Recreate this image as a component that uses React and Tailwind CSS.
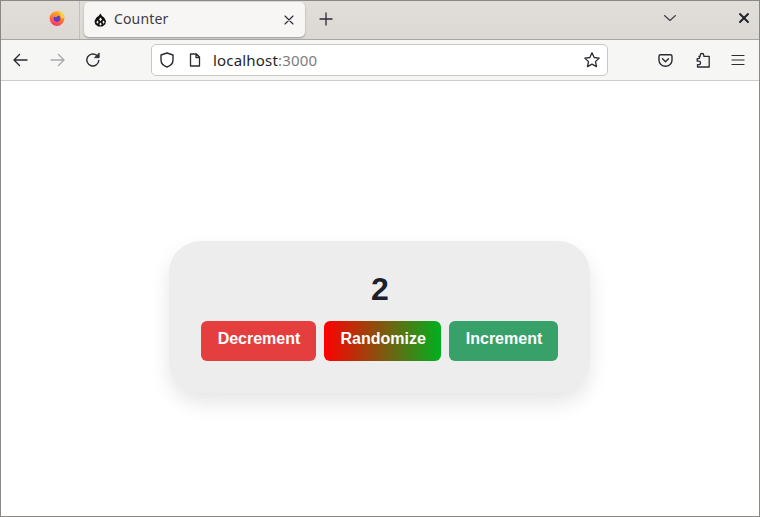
import React from "react";

const ui = { fontFamily: '"Noto Sans", sans-serif' };

function Firefox() {
  return (
    <svg width="16" height="16" viewBox="0 0 16 16">
      <defs>
        <linearGradient id="ffa" x1="0.7" y1="0" x2="0.3" y2="1">
          <stop offset="0" stopColor="#ffc02e" />
          <stop offset="0.5" stopColor="#ff7a2c" />
          <stop offset="1" stopColor="#f5307a" />
        </linearGradient>
      </defs>
      <circle cx="8" cy="8.500" r="7.400" fill="url(#ffa)" />
      <path d="M9.800.4c2.900 1.300 5.100 3.700 5.600 7.400l-3.400.4C11.800 5.400 11 2.800 9.800.4z" fill="#ffd23a" />
      <circle cx="8" cy="8.600" r="3.300" fill="#5e3ec4" />
      <path d="M4.400 6.200c1.600-1.500 4.300-1.600 6-.3-1.700-.1-2.800.4-3.200 1.300-1.100-.2-2-.5-2.800-1z" fill="#ff9a3c" />
      <path d="M.9 8.600c1 2.600 4 4.300 7 3.900-2.400-.7-3.500-2-3.900-3.700z" fill="#ff5a4c" />
    </svg>
  );
}

function TabIcon() {
  return (
    <svg width="13" height="14" viewBox="0 0 13 14" fill="#111">
      <path d="M6.500.6l1.500 2.500 2.100 1.300 1.900 3.600-.7 3.200-2.900 2.200H4.100L1.200 11.200.5 8l1.900-3.600 2.100-1.300z" />
      <path d="M6.500 4.600l1.500 1.800-1.500 1.800L5 6.400zM3.300 7.400l1.400 1.700-1.300 1.700-1-1.500zM9.700 7.400l-1.400 1.700 1.300 1.700 1-1.500zM6.500 9.600l1.300 1.600-1.300 1.300-1.300-1.300z" fill="#f7f6f4" />
    </svg>
  );
}

function Ico({ children, size = 18, vb = 18, cls = "text-[#2b2a33]" }) {
  return (
    <svg width={size} height={size} viewBox={`0 0 ${vb} ${vb}`} fill="none" stroke="currentColor" strokeWidth="1.400" strokeLinecap="round" strokeLinejoin="round" className={`shrink-0 ${cls}`}>
      {children}
    </svg>
  );
}

function CounterButton({ label, cls }) {
  return (
    <button className={`h-10 rounded-md pb-[5px] pl-[17px] pr-[15px] text-base font-bold text-white ${cls}`} style={{ fontFamily: '"Liberation Sans", Arial, sans-serif' }}>
      {label}
    </button>
  );
}

export default function App() {
  return (
    <div className="flex h-[517px] w-[760px] flex-col overflow-hidden border border-[#8a8886] bg-white" style={ui}>
      <div className="flex h-[39px] items-stretch border-b border-[#a9a7a4] bg-gradient-to-b from-[#e1deda] to-[#dcd9d5]">
        <div className="flex w-[79px] items-center justify-end border-r border-[#c4c1bd] pb-[4px] pr-[14px]">
          <Firefox />
        </div>
        <div className="ml-[4px] mt-px flex h-[35px] w-[221px] items-center rounded-[5px] bg-[#f7f6f4] pl-[10px] pr-[10px] shadow-[0_1px_2px_rgba(0,0,0,0.3)]">
          <TabIcon />
          <span className="ml-[7px] flex-1 pb-px text-[14px] leading-none tracking-[0.01em] text-[#3d3c43]">Counter</span>
          <Ico size={12} vb={12}><path d="M2 2l8 8M10 2l-8 8" strokeWidth="1.100" /></Ico>
        </div>
        <div className="ml-[14px] flex items-center pb-[3px]">
          <Ico size={14} vb={14}><path d="M7 1v12M1 7h12" strokeWidth="1.300" /></Ico>
        </div>
        <div className="flex-1" />
        <div className="mr-[9px] flex items-center gap-[61px] pb-[4px]">
          <Ico size={14} vb={14} cls="text-[#3d3c43]"><path d="M1.500 4.500L7 9.500l5.500-5" strokeWidth="1.100" /></Ico>
          <Ico size={12} vb={12} cls="text-[#1f1e24]"><path d="M2 2l8 8M10 2l-8 8" strokeWidth="1.900" /></Ico>
        </div>
      </div>

      <div className="flex h-[41px] items-center border-b border-[#cfccc8] bg-[#f6f6f4]">
        <div className="ml-[10px] flex items-center">
          <Ico><path d="M16 9H3M8.500 3.500L3 9l5.500 5.500" /></Ico>
          <span className="ml-[20px] flex"><Ico cls="text-[#a9a9ac]"><path d="M2 9h13M9.500 3.500L15 9l-5.500 5.500" /></Ico></span>
          <span className="ml-[17px] flex">
            <Ico>
              <path d="M14.800 9.500a6 6 0 1 1-2.200-5.200" />
              <path d="M15.200 2.300v4.400h-4.400z" fill="currentColor" strokeWidth="0.800" />
            </Ico>
          </span>
        </div>
        <div className="ml-[49px] flex h-[32px] w-[457px] items-center rounded-[5px] border border-[#c9c7c3] bg-white pl-[6px] pr-[6px]">
          <Ico><path d="M9 2l6 2v5c0 3.500-2.500 5.800-6 7-3.500-1.200-6-3.500-6-7V4z" /></Ico>
          <span className="ml-[11px] flex">
            <Ico size={16} vb={16}><path d="M3.500 2h6l3 3v9h-9zM9 2v3.500h3.500" strokeWidth="1.300" /></Ico>
          </span>
          <span className="ml-[10px] flex-1 text-[15px] leading-none tracking-[0.0125em] text-[#1f1e24]">
            localhost<span className="text-[#7d7c82]">:3000</span>
          </span>
          <Ico><path d="M9 1.800l2.200 4.700 5 .6-3.700 3.500 1 5L9 13.100 4.500 15.600l1-5L1.800 7.100l5-.6z" strokeWidth="1.300" /></Ico>
        </div>
        <div className="ml-[49px] flex items-center">
          <Ico size={17} vb={17}><path d="M3.500 2.800h10a1.500 1.500 0 0 1 1.500 1.500v4a6.500 6 0 0 1-13 0v-4a1.500 1.500 0 0 1 1.500-1.500z" /><path d="M5.500 6.800l3 3 3-3" /></Ico>
          <span className="ml-[20px] flex">
            <Ico size={18} vb={18}><path d="M8 2.500a1.800 1.800 0 0 1 1.800 1.800v1h5.400v10.700H3.500v-2.300h1.300a1.700 1.700 0 0 0 0-3.500H3.200V7.600h1.600a1.200 1.200 0 0 0 0-2.300h1.400v-1A1.800 1.800 0 0 1 8 2.500z" strokeWidth="1.300" /></Ico>
          </span>
          <span className="ml-[17px] flex"><Ico><path d="M3 4.500h12M3 9h12M3 13.500h12" strokeWidth="1.200" /></Ico></span>
        </div>
      </div>

      <div className="flex flex-1 items-start justify-center bg-white pr-[2px] pt-[160px]" style={{ fontFamily: '"Liberation Sans", Arial, sans-serif' }}>
        <div className="flex h-[152px] w-[421px] flex-col items-center rounded-[32px] bg-[#ededed] pt-[32px] shadow-[0_10px_20px_rgba(0,0,0,0.10)]">
          <div className="pl-[2px] text-[32px] font-bold leading-[32px] text-[#1a202c]">2</div>
          <div className="mt-[16px] flex gap-2">
            <CounterButton label="Decrement" cls="w-[115px] bg-[#e53e3e]" />
            <CounterButton label="Randomize" cls="w-[117px] bg-[linear-gradient(to_right,#ff0000,#00b01f)]" />
            <CounterButton label="Increment" cls="w-[109px] bg-[#38a169]" />
          </div>
        </div>
      </div>
    </div>
  );
}
